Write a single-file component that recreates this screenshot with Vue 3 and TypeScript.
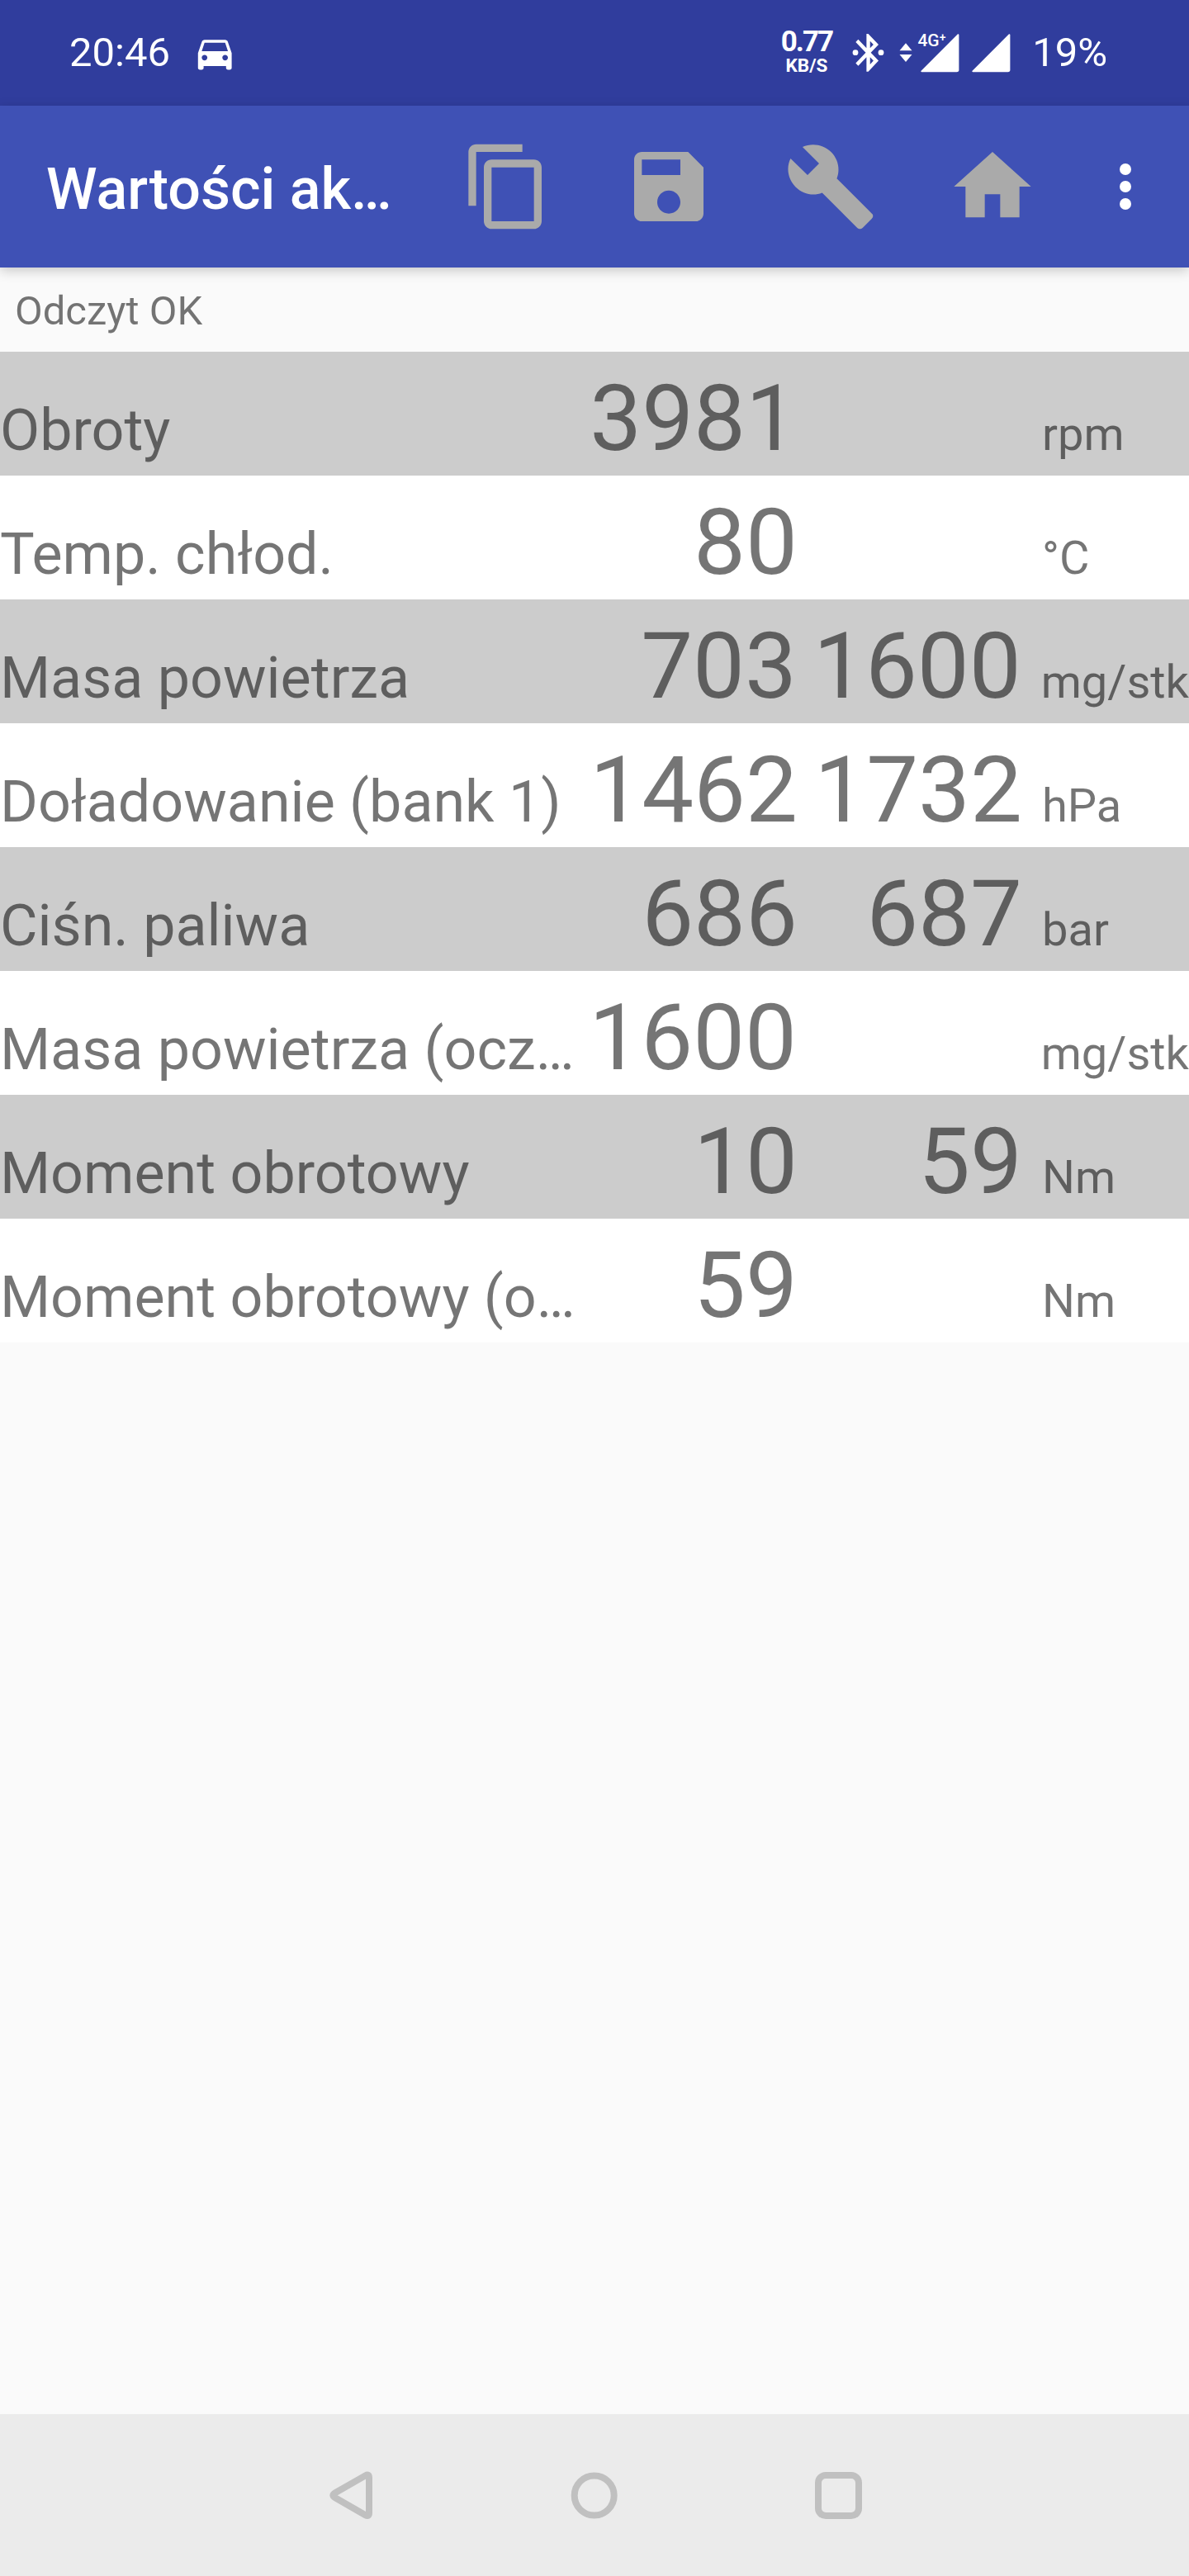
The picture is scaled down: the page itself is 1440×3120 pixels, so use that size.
<script setup lang="ts">
interface Reading {
  label: string
  actual: string
  target?: string
  unit: string
}

const readings: Reading[] = [
  { label: 'Obroty', actual: '3981', unit: 'rpm' },
  { label: 'Temp. chłod.', actual: '80', unit: '°C' },
  { label: 'Masa powietrza', actual: '703', target: '1600', unit: 'mg/stk' },
  { label: 'Doładowanie (bank 1)', actual: '1462', target: '1732', unit: 'hPa' },
  { label: 'Ciśn. paliwa', actual: '686', target: '687', unit: 'bar' },
  { label: 'Masa powietrza (ocz…', actual: '1600', unit: 'mg/stk' },
  { label: 'Moment obrotowy', actual: '10', target: '59', unit: 'Nm' },
  { label: 'Moment obrotowy (o…', actual: '59', unit: 'Nm' },
]

const actions: { name: string; path: string }[] = [
  {
    name: 'copy',
    path: 'M16 1H4c-1.1 0-2 .9-2 2v14h2V3h12V1zm3 4H8c-1.1 0-2 .9-2 2v14c0 1.1.9 2 2 2h11c1.1 0 2-.9 2-2V7c0-1.1-.9-2-2-2zm0 16H8V7h11v14z',
  },
  {
    name: 'save',
    path: 'M17 3H5c-1.11 0-2 .9-2 2v14c0 1.1.89 2 2 2h14c1.1 0 2-.9 2-2V7l-4-4zm-5 16c-1.66 0-3-1.34-3-3s1.34-3 3-3 3 1.34 3 3-1.34 3-3 3zm3-10H5V5h10v4z',
  },
  {
    name: 'settings',
    path: 'M22.7 19l-9.1-9.1c.9-2.3.4-5-1.5-6.9-2-2-5-2.4-7.4-1.3L9 6 6 9 1.6 4.7C.4 7.1.9 10.1 2.9 12.1c1.9 1.9 4.6 2.4 6.9 1.5l9.1 9.1c.4.4 1 .4 1.4 0l2.3-2.3c.5-.4.5-1.1.1-1.4z',
  },
  { name: 'home', path: 'M10 20v-6h4v6h5v-8h3L12 3 2 12h3v8z' },
]
</script>

<template>
  <div class="screen">
    <header class="status">
      <span class="clock">20:46</span>
      <svg class="car" viewBox="0 0 24 24">
        <path
          fill-rule="evenodd"
          d="M18.92 6.01C18.72 5.42 18.16 5 17.5 5h-11c-.66 0-1.21.42-1.42 1.01L3 12v8c0 .55.45 1 1 1h1c.55 0 1-.45 1-1v-1h12v1c0 .55.45 1 1 1h1c.55 0 1-.45 1-1v-8l-2.08-5.99zM6.5 16c-.83 0-1.5-.67-1.5-1.5S5.67 13 6.5 13s1.5.67 1.5 1.5S7.33 16 6.5 16zm11 0c-.83 0-1.5-.67-1.5-1.5s.67-1.5 1.5-1.5 1.5.67 1.5 1.5-.67 1.5-1.5 1.5zM5 11l1.5-4.5h11L19 11H5z"
        />
      </svg>
      <div class="speed">
        <span class="rate">0.77</span>
        <span class="rate-unit">KB/S</span>
      </div>
      <svg class="bluetooth" viewBox="0 0 42 50">
        <path
          transform="translate(-5.55 -1.57) scale(2.177 2.283)"
          d="M17.71 7.71L12 2h-1v7.59L6.41 5 5 6.41 10.59 12 5 17.59 6.41 19 11 14.41V22h1l5.71-5.71-4.3-4.29 4.3-4.29zM13 5.83l1.88 1.88L13 9.59V5.83zm1.88 10.46L13 18.17v-3.76l1.88 1.88z"
        />
        <circle cx="5" cy="25.7" r="3.4" />
        <circle cx="36" cy="25.7" r="3.4" />
      </svg>
      <svg class="traffic" viewBox="0 0 16 24">
        <path d="M8 .3l7.5 8.9H.5zM8 23l7.5-8.9H.5z" />
      </svg>
      <div class="mobile">
        <svg class="signal" viewBox="0 0 47 47">
          <path d="M45 .3Q46.4 0 46.4 1.6V43.5q0 2.7-2.7 2.7H1.2Q0 46 .4 45z" />
        </svg>
        <span class="network">4G<span class="plus">+</span></span>
      </div>
      <svg class="signal second" viewBox="0 0 47 47">
        <path d="M45 .3Q46.4 0 46.4 1.6V43.5q0 2.7-2.7 2.7H1.2Q0 46 .4 45z" />
      </svg>
      <span class="battery">19%</span>
    </header>

    <div class="appbar">
      <h1 class="title">Wartości ak…</h1>
      <button v-for="a in actions" :key="a.name" class="action" :aria-label="a.name">
        <svg viewBox="0 0 24 24"><path :d="a.path" /></svg>
      </button>
      <button class="more" aria-label="menu">
        <svg viewBox="0 0 24 24">
          <circle cx="12" cy="6" r="2" />
          <circle cx="12" cy="12" r="2" />
          <circle cx="12" cy="18" r="2" />
        </svg>
      </button>
    </div>

    <main class="content">
      <p class="message">Odczyt OK</p>
      <div v-for="r in readings" :key="r.label" class="row">
        <span class="label">{{ r.label }}</span>
        <span class="value">{{ r.actual }}</span>
        <span class="value target">{{ r.target }}</span>
        <span class="unit">{{ r.unit }}</span>
      </div>
    </main>

    <nav class="navbar">
      <svg viewBox="0 0 64 64">
        <path d="M50.5 8.4L14 29.300Q8.700 32.300 14 35.300L50.500 56.200Q55 58.800 55 53.600V11Q55 5.800 50.500 8.400z" />
      </svg>
      <svg viewBox="0 0 64 64"><circle cx="31.700" cy="32.500" r="24" /></svg>
      <svg viewBox="0 0 64 64"><rect x="7" y="8" width="49" height="49" rx="9" /></svg>
    </nav>
  </div>
</template>

<style>
body {
  margin: 0;
  background: #fafafa;
}
</style>

<style scoped>
.screen {
  display: flex;
  flex-direction: column;
  width: 1440px;
  height: 3120px;
  overflow: hidden;
  background: #fafafa;
  font-family: Roboto, sans-serif;
}

.status {
  display: flex;
  align-items: flex-start;
  box-sizing: border-box;
  height: 128px;
  padding-left: 84px;
  background: #303d9d;
  color: #fff;
  fill: #fff;
}

.clock,
.battery {
  margin-top: 35px;
  font-size: 49px;
  line-height: 58px;
  white-space: nowrap;
}

.clock {
  width: 149px;
}

.car {
  width: 54.4px;
  height: 54.4px;
  margin-top: 37px;
}

.speed {
  display: flex;
  flex-direction: column;
  align-items: center;
  width: 64px;
  margin: 30px 0 0 657.6px;
  font-weight: 700;
}

.rate {
  font-size: 35px;
  line-height: 41px;
  letter-spacing: -2px;
}

.rate-unit {
  margin-top: -5px;
  font-size: 22.5px;
  line-height: 26px;
}

.bluetooth {
  width: 42px;
  height: 50px;
  margin: 38px 0 0 22.5px;
}

.traffic {
  width: 16px;
  height: 24px;
  margin: 51.7px 0 0 15.4px;
}

.mobile {
  position: relative;
  display: flex;
  margin: 41px 0 0 10px;
}

.signal {
  width: 47px;
  height: 47px;
}

.network {
  position: absolute;
  left: -3.5px;
  top: -4px;
  font-size: 21px;
  font-weight: 500;
  line-height: 24px;
  white-space: nowrap;
}

.plus {
  position: relative;
  top: -6px;
  font-size: 14px;
}

.signal.second {
  margin: 41px 0 0 15.3px;
}

.battery {
  margin-left: 26px;
}

.appbar {
  position: relative;
  z-index: 1;
  display: flex;
  align-items: center;
  height: 196px;
  background: #3f51b5;
  box-shadow: 0 4px 14px rgba(0, 0, 0, 0.2);
}

.title {
  box-sizing: border-box;
  width: 516px;
  margin: 0;
  padding: 5px 0 0 56px;
  color: #fff;
  font-size: 70px;
  font-weight: 500;
  line-height: 82px;
  white-space: nowrap;
}

.action,
.more {
  display: flex;
  align-items: center;
  justify-content: center;
  width: 196px;
  height: 196px;
  padding: 0;
  border: 0;
  background: none;
}

.action svg {
  width: 112px;
  height: 112px;
  fill: #aaa;
}

.more {
  width: 126px;
}

.more svg {
  width: 84px;
  height: 84px;
  fill: #fff;
}

.content {
  flex: 1;
  color: rgba(0, 0, 0, 0.54);
}

.message {
  box-sizing: border-box;
  height: 102px;
  margin: 0;
  padding: 24px 0 0 18px;
  font-size: 49px;
  line-height: 58px;
}

.row {
  display: flex;
  align-items: baseline;
  box-sizing: border-box;
  height: 150px;
  padding-top: 15px;
  overflow: hidden;
  background: #fff;
  white-space: nowrap;
}

.row:nth-child(even) {
  background: #ccc;
}

.label {
  width: 700px;
  font-size: 70px;
  line-height: 82px;
}

.value {
  width: 266px;
  font-size: 112px;
  line-height: 131px;
  text-align: right;
}

.value.target {
  width: 272px;
}

.unit {
  margin-left: 24px;
  font-size: 56px;
  line-height: 66px;
}

.navbar {
  display: flex;
  align-items: center;
  justify-content: center;
  gap: 232px;
  height: 196px;
  background: #ebebeb;
}

.navbar svg {
  width: 64px;
  height: 64px;
  fill: none;
  stroke: #c0c0c0;
  stroke-width: 8;
  stroke-linejoin: round;
}
</style>
